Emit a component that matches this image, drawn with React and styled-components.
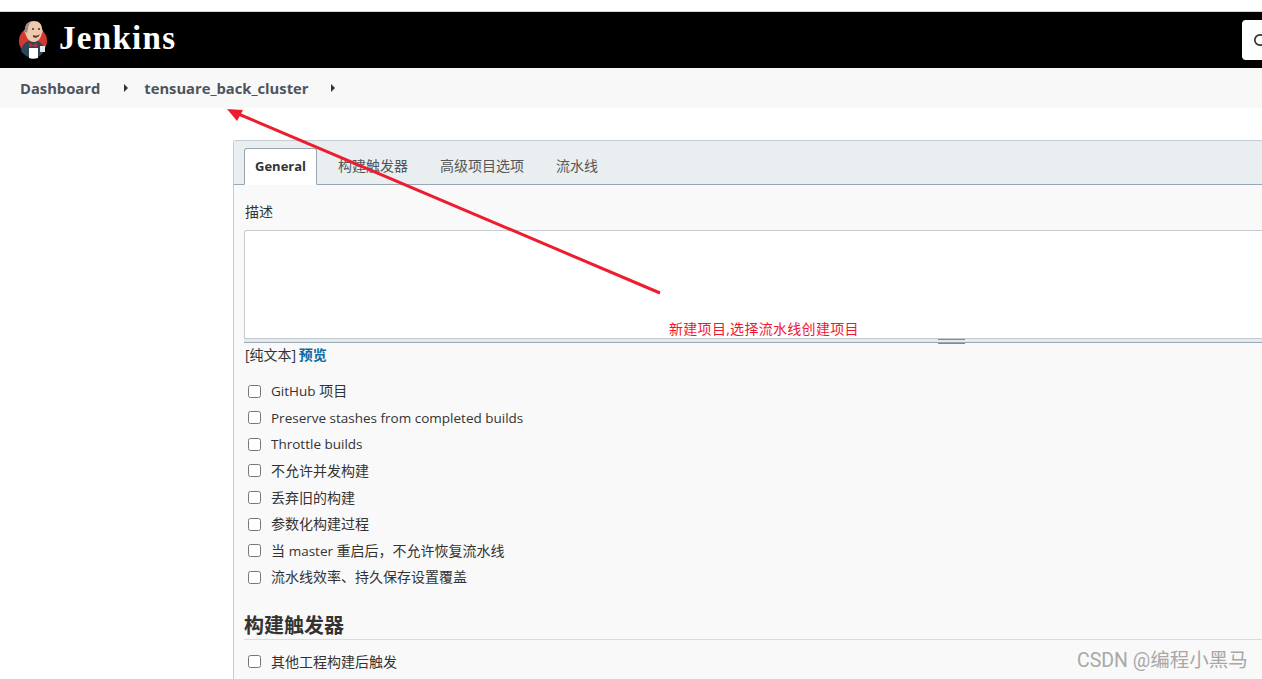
import React from 'react';
import styled, { createGlobalStyle } from 'styled-components';

const SANS = `"Open Sans", "Noto Sans CJK SC", sans-serif`;

const Global = createGlobalStyle`
  html, body {
    margin: 0;
    padding: 0;
    height: 100%;
    overflow: hidden;
    background: #fff;
  }
  * { box-sizing: border-box; }
`;

const Page = styled.div`
  position: relative;
  width: 1262px;
  height: 679px;
  overflow: hidden;
  padding-top: 12px;
  font-family: ${SANS};
  color: #333;
`;

const Header = styled.header`
  height: 56px;
  background: #000;
  box-shadow: 0 -1px 0 #d8d8d8;
  display: flex;
  align-items: center;
  justify-content: space-between;
  padding-left: 18px;
`;

const Brand = styled.div`
  display: flex;
  align-items: center;
  gap: 11px;
`;

const BrandName = styled.span`
  font-family: "Liberation Serif", serif;
  font-weight: 700;
  font-size: 33px;
  line-height: 38px;
  letter-spacing: 1.3px;
  color: #fff;
  margin-bottom: 4px;
`;

const SearchStub = styled.div`
  width: 20px;
  height: 40px;
  background: #fff;
  border-radius: 4px 0 0 4px;
  overflow: hidden;
  padding: 12px 0 0 11px;
  flex: none;
`;

const Crumbs = styled.nav`
  height: 40px;
  background: #f8f8f8;
  display: flex;
  align-items: center;
  padding-left: 20px;
  font-size: 14.75px;
  font-weight: 700;
  color: #4d545d;
`;

const Crumb = styled.a`
  margin-right: ${p => p.$gap}px;
`;

const Caret = styled.i`
  width: 0;
  height: 0;
  border-left: 4px solid #333;
  border-top: 4px solid transparent;
  border-bottom: 4px solid transparent;
  margin-right: ${p => p.$gap}px;
`;

const Main = styled.main`
  padding: 32px 0 0 233px;
`;

const Panel = styled.section`
  width: 1100px;
  height: 560px;
  background: #f9f9f9;
  border: 1px solid #c6ccd0;
  border-right: 0;
  border-radius: 3px 0 0 0;
`;

const TabBar = styled.div`
  height: 44px;
  background: #e9eef1;
  border-bottom: 1px solid #9aa7b2;
  display: flex;
  align-items: flex-end;
  padding-left: 10px;
  font-size: 14px;
`;

const Tab = styled.div`
  height: ${p => (p.$active ? 37 : 36)}px;
  margin-bottom: ${p => (p.$active ? -1 : 0)}px;
  padding: 0 ${p => (p.$active ? 10 : 0)}px 2px;
  margin-right: ${p => (p.$active ? 21 : 32)}px;
  display: flex;
  align-items: center;
  font-size: ${p => (p.$active ? 13 : 14)}px;
  font-weight: ${p => (p.$active ? 700 : 400)};
  color: ${p => (p.$active ? '#333' : '#555')};
  background: ${p => (p.$active ? '#fff' : 'transparent')};
  border: ${p => (p.$active ? '1px solid #9aa7b2' : '0')};
  border-bottom: ${p => (p.$active ? '1px solid #fff' : '0')};
  border-radius: 3px 3px 0 0;
`;

const Body = styled.div`
  padding: 18px 0 0 10px;
  font-size: 14px;
`;

const FieldLabel = styled.div`
  height: 18px;
  line-height: 18px;
  margin-bottom: 9px;
  padding-left: 1px;
`;

const TextBox = styled.div`
  height: 108px;
  background: #fff;
  border: 1px solid #c6ccd0;
  border-right: 0;
  border-bottom: 0;
  border-radius: 3px 0 0 0;
`;

const Grip = styled.div`
  height: 5px;
  background: #e6e9eb;
  border-top: 1px solid #c3cacf;
  border-bottom: 1px solid #9aa7b2;
  position: relative;
  &::after {
    content: '';
    position: absolute;
    left: 694px;
    top: 0;
    width: 27px;
    height: 3px;
    border-top: 1px solid #888;
    border-bottom: 1px solid #888;
  }
`;

const Format = styled.div`
  height: 22px;
  line-height: 24px;
  margin-bottom: 14px;
  padding-left: 1px;
  word-spacing: -1px;
`;

const Preview = styled.a`
  color: #0b6aa2;
  font-weight: 700;
`;

const Option = styled.label`
  display: flex;
  align-items: center;
  height: 26.57px;
  color: #333;
`;

const Box = styled.input.attrs({ type: 'checkbox' })`
  width: 13px;
  height: 13px;
  margin: 0 10px 2px 4px;
  flex: none;
`;

const OptionText = styled.span`
  line-height: 18px;
  padding-bottom: 2px;
`;

// latin runs sit a little smaller than the CJK ones next to them
const Lat = styled.span`
  font-size: 13.5px;
`;

const SectionTitle = styled.h2`
  margin: 17px 0 10px;
  height: 31px;
  font-size: 20px;
  line-height: 34px;
  font-weight: 700;
  color: #333;
  border-bottom: 1px solid #dcdcdc;
`;

const Arrow = styled.svg`
  position: absolute;
  left: 0;
  top: 0;
  pointer-events: none;
`;

const Note = styled.div`
  position: absolute;
  left: 669px;
  top: 320px;
  font-size: 14px;
  line-height: 18px;
  letter-spacing: 0.3px;
  color: #f0162f;
`;

const Watermark = styled.div`
  position: absolute;
  left: 1077px;
  top: 649px;
  font-family: "Roboto", "Noto Sans CJK SC", sans-serif;
  font-size: 19.5px;
  line-height: 24px;
  color: #a8a8a8;
`;

const options = [
  <><Lat>GitHub</Lat> 项目</>,
  <Lat>Preserve stashes from completed builds</Lat>,
  <Lat>Throttle builds</Lat>,
  '不允许并发构建',
  '丢弃旧的构建',
  '参数化构建过程',
  <>当 <Lat>master</Lat> 重启后，不允许恢复流水线</>,
  '流水线效率、持久保存设置覆盖',
];

function ButlerLogo() {
  return (
    <svg width="30" height="40" viewBox="0 0 30 40">
      <circle cx="15" cy="21" r="14" fill="#d33833" />
      <path d="M3 31c1-7 6-11 12-11s10 4 12 10c-3 5-7 8-12 8S6 35 3 31z" fill="#2c4759" />
      <path d="M7 9c0-5 4-8 9-8s8 3 8 8c1 1 1 3 0 4-1 5-4 9-8 9-4 0-7-3-8-7-1-1-2-4-1-6z" fill="#efc9ad" />
      <path d="M7 12c-1-5 2-9 6-10-2 2-3 4-3 7l-1 4z" fill="#8c8c8c" />
      <path d="M15 15c2 1 5 1 7-1-1 3-4 5-7 3z" fill="#6e2f27" />
      <circle cx="15" cy="9" r="1" fill="#333" />
      <circle cx="21" cy="9" r="1" fill="#333" />
      <path d="M11 23l4 2 4-2v4l-4-1-4 1z" fill="#d6272e" />
      <path d="M11 28h9v10c-3 1-7 1-9 0z" fill="#fff" />
      <path d="M22 26h5v6h-5z" fill="#e8e8e8" />
    </svg>
  );
}

export default function App() {
  return (
    <Page>
      <Global />
      <Header>
        <Brand>
          <ButlerLogo />
          <BrandName>Jenkins</BrandName>
        </Brand>
        <SearchStub>
          <svg width="16" height="16" viewBox="0 0 16 16">
            <circle cx="7" cy="7" r="5.2" fill="none" stroke="#333" strokeWidth="1.7" />
          </svg>
        </SearchStub>
      </Header>
      <Crumbs>
        <Crumb $gap={24}>Dashboard</Crumb>
        <Caret $gap={16} />
        <Crumb $gap={23}>tensuare_back_cluster</Crumb>
        <Caret $gap={0} />
      </Crumbs>
      <Main>
        <Panel>
          <TabBar>
            <Tab $active>General</Tab>
            <Tab>构建触发器</Tab>
            <Tab>高级项目选项</Tab>
            <Tab>流水线</Tab>
          </TabBar>
          <Body>
            <FieldLabel>描述</FieldLabel>
            <TextBox />
            <Grip />
            <Format>[纯文本] <Preview>预览</Preview></Format>
            {options.map((o, i) => (
              <Option key={i}><Box /><OptionText>{o}</OptionText></Option>
            ))}
            <SectionTitle>构建触发器</SectionTitle>
            <Option><Box /><OptionText>其他工程构建后触发</OptionText></Option>
          </Body>
        </Panel>
      </Main>
      <Arrow width="1262" height="679" viewBox="0 0 1262 679">
        <line x1="660" y1="293" x2="236" y2="113" stroke="#ed1c2e" strokeWidth="3" />
        <path d="M227 109l16 1-6 11z" fill="#ed1c2e" />
      </Arrow>
      <Note>新建项目,选择流水线创建项目</Note>
      <Watermark>CSDN @编程小黑马</Watermark>
    </Page>
  );
}
